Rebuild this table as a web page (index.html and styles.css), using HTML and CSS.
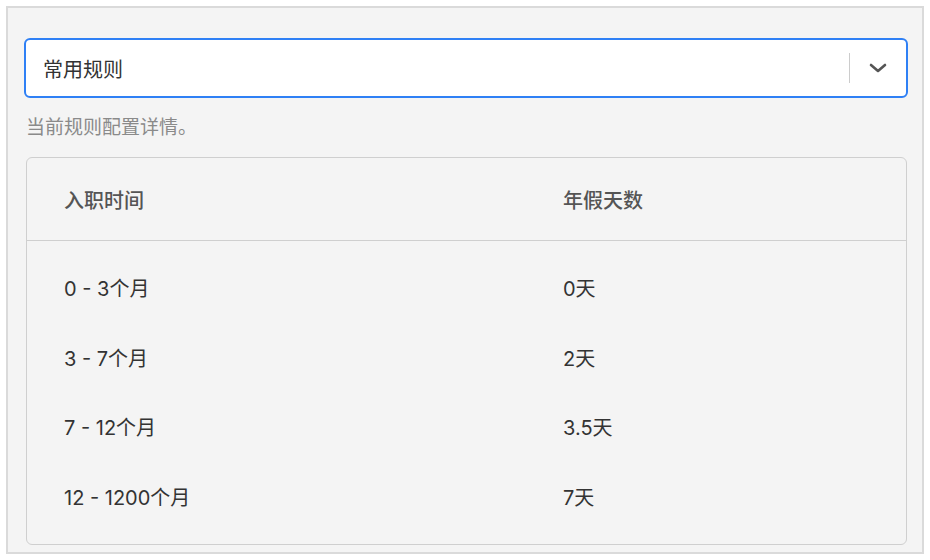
FILE: index.html
```html
<!DOCTYPE html>
<html lang="zh">
<head>
<meta charset="utf-8">
<link rel="stylesheet" href="styles.css">
</head>
<body>
<div class="panel">
  <div class="select">
    <span class="select-value">常用规则</span>
    <span class="select-sep"></span>
    <span class="select-arrow">
      <svg width="18" height="10" viewBox="0 0 18 10"><path d="M2 2 L9 8 L16 2" fill="none" stroke="#555" stroke-width="2.6" stroke-linecap="round" stroke-linejoin="round"/></svg>
    </span>
  </div>
  <p class="hint">当前规则配置详情。</p>
  <div class="table-box">
    <div class="row head">
      <div class="cell">入职时间</div>
      <div class="cell">年假天数</div>
    </div>
    <div class="body">
      <div class="row"><div class="cell">0 - 3个月</div><div class="cell">0天</div></div>
      <div class="row"><div class="cell">3 - 7个月</div><div class="cell">2天</div></div>
      <div class="row"><div class="cell">7 - 12个月</div><div class="cell">3.5天</div></div>
      <div class="row"><div class="cell">12 - 1200个月</div><div class="cell">7天</div></div>
    </div>
  </div>
</div>
</body>
</html>
```

FILE: styles.css
```css
html, body { margin: 0; padding: 0; background: #ffffff; }
body {
  padding: 6px;
  font-family: "Inter", "Noto Sans CJK SC", sans-serif;
  color: #333;
}
.panel {
  width: 918px;
  height: 548px;
  box-sizing: border-box;
  border: 2px solid #dadada;
  background: #f4f4f4;
  padding: 30px 14px 0 16px;
}
.select {
  height: 60px;
  box-sizing: border-box;
  border: 2px solid #2f80f5;
  border-radius: 6px;
  background: #fff;
  display: flex;
  align-items: center;
  padding-left: 17px;
}
.select-value {
  flex: 1;
  font-size: 20px;
  color: #333;
}
.select-sep {
  width: 1px;
  height: 30px;
  background: #cccccc;
}
.select-arrow {
  width: 56px;
  display: flex;
  justify-content: center;
  align-items: center;
}
.select-arrow svg { display: block; }
.hint {
  margin: 13px 0 0 2px;
  font-size: 19px;
  color: #8a8a8a;
  line-height: 34px;
}
.table-box {
  margin: 12px 1px 0 2px;
  border: 1px solid #cfcfcf;
  border-radius: 6px;
  height: 388px;
  box-sizing: border-box;
}
.row {
  display: flex;
  align-items: center;
  height: 69.5px;
  padding-left: 37px;
  font-size: 20px;
  color: #333;
}
.row .cell:first-child { width: 499px; }
.row.head {
  height: 82px;
  border-bottom: 1px solid #cfcfcf;
  color: #555;
  font-weight: 500;
}
.body { padding-top: 12px; }
```
